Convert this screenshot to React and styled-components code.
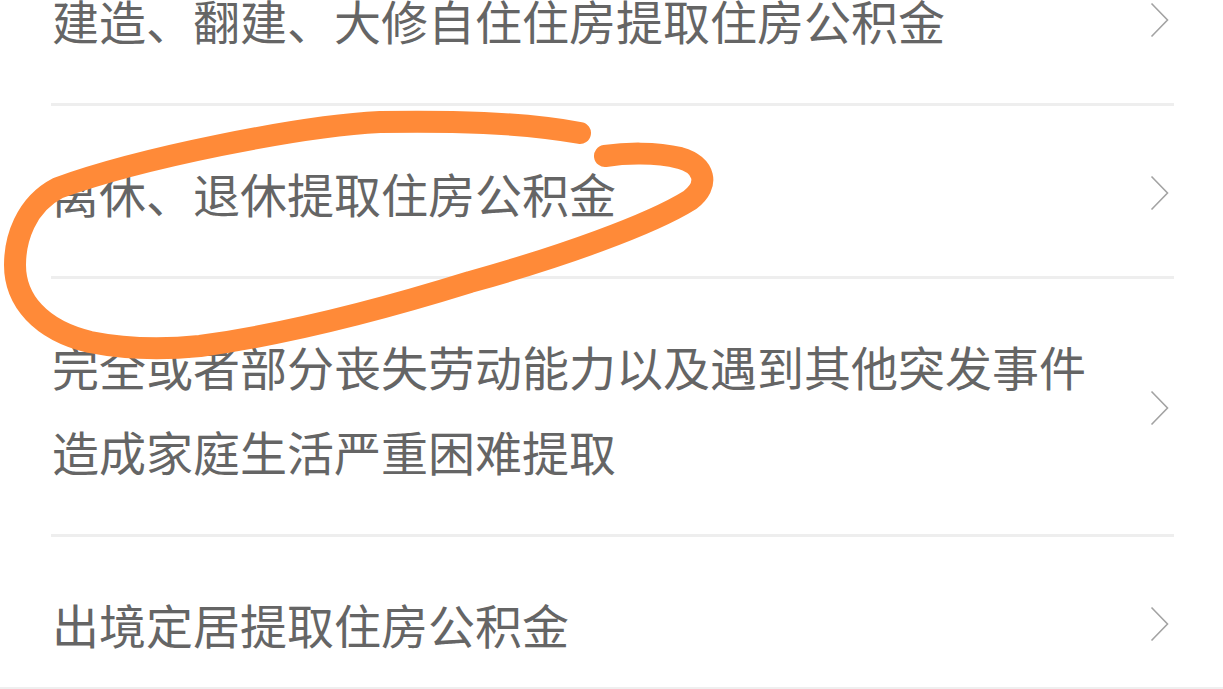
import React from 'react';
import styled, { createGlobalStyle } from 'styled-components';

const GlobalStyle = createGlobalStyle`
  html, body {
    margin: 0;
    padding: 0;
    background: #ffffff;
  }
  * {
    box-sizing: border-box;
  }
`;

const Screen = styled.div`
  position: relative;
  width: 1223px;
  height: 689px;
  overflow: hidden;
  background: #ffffff;
  border-bottom: 2px solid #efefef;
  font-family: "Noto Sans CJK SC", "Noto Sans", sans-serif;
`;

const List = styled.div`
  display: flex;
  flex-direction: column;
  margin-top: -67px;
`;

const Row = styled.div`
  display: flex;
  align-items: center;
  margin: 0 49px 0 51px;
  padding: 44px 0 41px;
  border-bottom: 3px solid #eeeeee;
`;

const Label = styled.div`
  flex: 1;
  max-width: 1063px;
  font-size: 47px;
  line-height: 85px;
  color: #656565;
  padding-left: 1px;
`;

const Chevron = styled.svg`
  width: 19px;
  height: 36px;
  margin-left: auto;
  margin-right: 5px;
  flex-shrink: 0;
`;

const Scribble = styled.svg`
  position: absolute;
  left: 0;
  top: 0;
  width: 1223px;
  height: 689px;
  pointer-events: none;
`;

const items = [
  '建造、翻建、大修自住住房提取住房公积金',
  '离休、退休提取住房公积金',
  '完全或者部分丧失劳动能力以及遇到其他突发事件造成家庭生活严重困难提取',
  '出境定居提取住房公积金',
];

const Arrow = () => (
  <Chevron viewBox="0 0 19 36">
    <polyline
      points="1.5,1.5 17.5,18 1.5,34.5"
      fill="none"
      stroke="#a3a3a3"
      strokeWidth="1.6"
    />
  </Chevron>
);

// hand-drawn marker loop around the second item
const loop =
  'M 580 133 C 520 122, 450 121, 380 122 ' +
  'C 300 126, 140 158, 58 188 ' +
  'C 25 205, 15 240, 15 265 ' +
  'C 15 300, 40 330, 90 342 ' +
  'C 130 350, 170 349, 200 346 ' +
  'C 280 335, 380 310, 470 282 ' +
  'C 560 257, 650 225, 690 200 ' +
  'C 710 185, 705 165, 680 158 ' +
  'C 655 152, 625 153, 605 156';

const App = () => {
  return (
    <Screen>
      <GlobalStyle />
      <List>
        {items.map((text) => (
          <Row key={text}>
            <Label>{text}</Label>
            <Arrow />
          </Row>
        ))}
      </List>
      <Scribble viewBox="0 0 1223 689">
        <path
          d={loop}
          fill="none"
          stroke="#ff8a38"
          strokeWidth="22"
          strokeLinecap="round"
          strokeLinejoin="round"
        />
      </Scribble>
    </Screen>
  );
};

export default App;
